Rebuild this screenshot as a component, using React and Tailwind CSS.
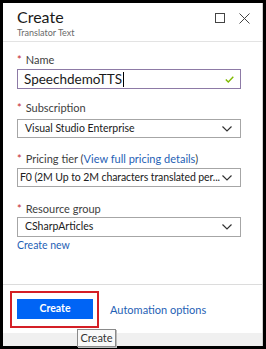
import React from "react";

function Chevron() {
  return (
    <svg width="10" height="6" viewBox="0 0 10 6" className="shrink-0">
      <path d="M0.5 0.5 L5 5 L9.5 0.5" fill="none" stroke="#333" strokeWidth="1.2" />
    </svg>
  );
}

function Label({ children, className = "" }) {
  return (
    <div className={"flex items-center h-[14px] text-[11px] leading-[14px] text-[#404040] " + className}>
      <span className="text-[#c4262e] mr-[4px] text-[11px]">*</span>
      <span>{children}</span>
    </div>
  );
}

function Select({ children, className = "", textClass = "pl-[7px]" }) {
  return (
    <div className={"flex items-center justify-between w-[224px] border border-[#a6a6a6] bg-white pr-[8px] " + className}>
      <span className={"text-[10.5px] text-[#202020] whitespace-nowrap " + textClass}>{children}</span>
      <Chevron />
    </div>
  );
}

export default function App() {
  return (
    <div className="w-[266px] h-[349px] bg-black p-[3px]" style={{ fontFamily: "Lato, 'Open Sans', sans-serif" }}>
      <div className="relative w-full h-full bg-white flex flex-col border-r border-[#d0d0d0]">
        {/* header */}
        <div className="h-[39px] pl-[14px] pr-[12px] pt-[4px] border-b border-[#e3e3e3] flex justify-between">
          <div>
            <div className="text-[16px] leading-[20px] text-[#1a1a1a]">Create</div>
            <div className="text-[9px] leading-[12px] text-[#6a6a6a]">Translator Text</div>
          </div>
          <div className="flex items-start gap-[14px] pt-[6px]">
            <svg width="10" height="10" viewBox="0 0 10 10">
              <rect x="0.5" y="0.5" width="9" height="9" fill="none" stroke="#444" strokeWidth="1" />
            </svg>
            <svg width="11" height="11" viewBox="0 0 11 11">
              <path d="M0.5 0.5 L10.5 10.5 M10.5 0.5 L0.5 10.5" stroke="#444" strokeWidth="1" />
            </svg>
          </div>
        </div>

        {/* form */}
        <div className="flex-1 pl-[14px]">
          <Label className="mt-[11px]">Name</Label>
          <div className="mt-[2px] w-[224px] h-[20px] border border-[#8d7aa6] flex items-center justify-between pl-[6px] pr-[6px]">
            <span className="flex items-center text-[13.5px] text-[#1a1a1a] leading-[18px]">
              SpeechdemoTTS
              <span className="inline-block w-[1px] h-[15px] bg-black ml-[1px]" />
            </span>
            <svg width="9" height="7" viewBox="0 0 9 7">
              <path d="M0.8 3.5 L3.3 6 L8.3 0.8" fill="none" stroke="#7fba00" strokeWidth="1.4" />
            </svg>
          </div>

          <Label className="mt-[12px]">Subscription</Label>
          <Select className="mt-[4px] h-[19px]">Visual Studio Enterprise</Select>

          <Label className="mt-[14px]">
            Pricing tier (<span className="text-[#1f5fb5]">View full pricing details</span>)
          </Label>
          <Select className="mt-[2px] h-[19px]" textClass="pl-[2px] tracking-[-0.1px]">
            F0 (2M Up to 2M characters translated per...
          </Select>

          <Label className="mt-[15px]">Resource group</Label>
          <Select className="mt-[1px] h-[20px]">CSharpArticles</Select>
          <div className="mt-[1px] text-[10.5px] leading-[14px] text-[#1f5fb5]">Create new</div>
        </div>

        {/* footer */}
        <div className="border-t border-[#dcdcdc]">
          <div className="h-[48px] flex items-start pl-[7px] pt-[6px]">
            <div className="border-2 border-[#d41f26] w-[89px] h-[37px] pl-[5px] pt-[6px]">
              <div className="w-[76px] h-[20px] bg-[#0064f5] flex items-center justify-center text-white text-[10.5px] font-bold">
                Create
              </div>
            </div>
            <div className="ml-[11px] mt-[12px] text-[11px] leading-[14px] text-[#1f5fb5]">Automation options</div>
          </div>
          <div className="h-[13px] bg-[#f0f0f0]" />
        </div>

        <div className="absolute left-[74px] top-[326px] w-[39px] h-[18px] bg-[#f9f9f9] border border-[#8a8a8a] flex items-center justify-center text-[11px] text-[#333] shadow-[1px_1px_0_#bbb]">
          Create
        </div>
      </div>
    </div>
  );
}
